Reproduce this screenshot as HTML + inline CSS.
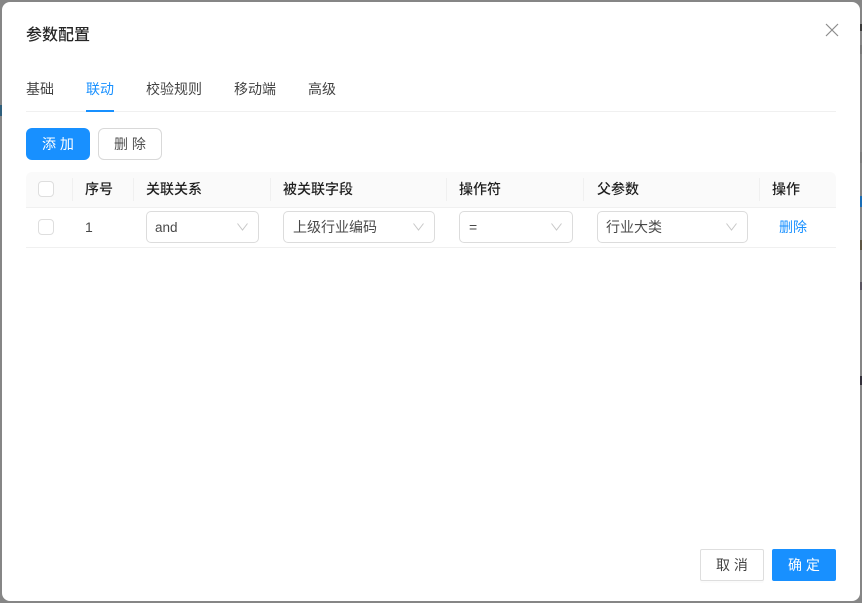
<!DOCTYPE html>
<html><head><meta charset="utf-8">
<style>
html,body{margin:0;padding:0;width:862px;height:603px;overflow:hidden;background:#868686;}
body{position:relative;font-family:"Liberation Sans","Noto Sans CJK SC",sans-serif;font-size:14px;color:rgba(0,0,0,.85);}
.a{position:absolute;white-space:nowrap;}
#dlg{position:absolute;left:2px;top:2px;width:858px;height:599px;background:#fff;border-radius:8px;}
.t{line-height:20px;height:20px;}
.th{font-weight:500;color:rgba(0,0,0,.88);line-height:20px;top:179px;}
.sep{position:absolute;width:1px;height:23px;top:178px;background:#f0f0f0;}
.cb{position:absolute;left:38px;width:14px;height:14px;border:1px solid #dedede;border-radius:4px;background:#fff;}
.sel{position:absolute;top:211px;height:30px;border:1px solid #dcdcdc;border-radius:5px;background:#fff;box-sizing:content-box;}
.sel span{position:absolute;left:9px;top:5px;line-height:20px;color:rgba(0,0,0,.72);white-space:nowrap;}
.sel svg{position:absolute;top:10px;right:10px;}
.btn{position:absolute;box-sizing:border-box;text-align:center;border-radius:6px;line-height:30px;height:32px;}
.frag{position:absolute;width:2px;}
</style></head><body>
<div class="frag" style="left:860px;top:24px;height:7px;background:#3a3a3a"></div>
<div class="frag" style="left:860px;top:45px;height:9px;background:#787878"></div>
<div class="frag" style="left:860px;top:152px;height:11px;background:#7b7b7b"></div>
<div class="frag" style="left:860px;top:196px;height:11px;background:#1a6db5"></div>
<div class="frag" style="left:860px;top:240px;height:10px;background:#5e5644"></div>
<div class="frag" style="left:860px;top:282px;height:8px;background:#5a5560"></div>
<div class="frag" style="left:860px;top:376px;height:9px;background:#33303a"></div>
<div class="frag" style="left:0;top:105px;height:11px;background:#2f5f7c"></div>
<div id="dlg"></div>
<div class="a" style="left:26px;top:24px;font-size:16px;line-height:24px;font-weight:500;color:rgba(0,0,0,.85)">参数配置</div>
<svg class="a" style="left:824px;top:22px" width="16" height="16" viewBox="0 0 16 16"><path d="M2 2L14 14M14 2L2 14" stroke="#8c8c8c" stroke-width="1.2" fill="none"/></svg>

<div class="a t" style="left:26px;top:79px;color:rgba(0,0,0,.75)">基础</div>
<div class="a t" style="left:86px;top:79px;color:#1890ff">联动</div>
<div class="a t" style="left:146px;top:79px;color:rgba(0,0,0,.75)">校验规则</div>
<div class="a t" style="left:234px;top:79px;color:rgba(0,0,0,.75)">移动端</div>
<div class="a t" style="left:308px;top:79px;color:rgba(0,0,0,.75)">高级</div>
<div class="a" style="left:26px;top:111px;width:810px;height:1px;background:#f0f0f0"></div>
<div class="a" style="left:86px;top:110px;width:28px;height:2px;background:#1890ff"></div>

<div class="btn" style="left:26px;top:128px;width:64px;background:#1890ff;color:#fff;line-height:32px;">添 加</div>
<div class="btn" style="left:98px;top:128px;width:64px;border:1px solid #d9d9d9;background:#fff;color:rgba(0,0,0,.7)">删 除</div>

<div class="a" style="left:26px;top:172px;width:810px;height:35px;background:#fafafa;border-radius:6px 6px 0 0;"></div>
<div class="a" style="left:26px;top:207px;width:810px;height:1px;background:#f0f0f0"></div>
<div class="a" style="left:26px;top:247px;width:810px;height:1px;background:#f0f0f0"></div>
<div class="sep" style="left:72px"></div>
<div class="sep" style="left:133px"></div>
<div class="sep" style="left:270px"></div>
<div class="sep" style="left:446px"></div>
<div class="sep" style="left:583px"></div>
<div class="sep" style="left:759px"></div>
<div class="cb" style="top:181px"></div>
<div class="cb" style="top:219px"></div>
<div class="a th" style="left:85px">序号</div>
<div class="a th" style="left:146px">关联关系</div>
<div class="a th" style="left:283px">被关联字段</div>
<div class="a th" style="left:459px">操作符</div>
<div class="a th" style="left:597px">父参数</div>
<div class="a th" style="left:772px">操作</div>

<div class="a t" style="left:85px;top:217px;color:rgba(0,0,0,.72)">1</div>
<div class="sel" style="left:146px;width:111px"><span style="left:8px;top:6px;font-size:13.5px">and</span><svg width="12" height="10" viewBox="0 0 12 10"><path d="M1.5 1.5L6.5 8L11.5 1.5" stroke="#c8c8c8" stroke-width="1" fill="none"/></svg></div>
<div class="sel" style="left:283px;width:150px"><span>上级行业编码</span><svg width="12" height="10" viewBox="0 0 12 10"><path d="M1.5 1.5L6.5 8L11.5 1.5" stroke="#c8c8c8" stroke-width="1" fill="none"/></svg></div>
<div class="sel" style="left:459px;width:112px"><span>=</span><svg width="12" height="10" viewBox="0 0 12 10"><path d="M1.5 1.5L6.5 8L11.5 1.5" stroke="#c8c8c8" stroke-width="1" fill="none"/></svg></div>
<div class="sel" style="left:597px;width:149px"><span style="left:8px">行业大类</span><svg width="12" height="10" viewBox="0 0 12 10"><path d="M1.5 1.5L6.5 8L11.5 1.5" stroke="#c8c8c8" stroke-width="1" fill="none"/></svg></div>
<div class="a t" style="left:779px;top:217px;color:#1890ff">删除</div>

<div class="btn" style="left:700px;top:549px;width:64px;border:1px solid #dedede;background:#fff;color:rgba(0,0,0,.75);border-radius:2px;box-shadow:0 2px 0 rgba(0,0,0,.015)">取 消</div>
<div class="btn" style="left:772px;top:549px;width:64px;background:#1890ff;color:#fff;line-height:32px;border-radius:2px;">确 定</div>
</body></html>
